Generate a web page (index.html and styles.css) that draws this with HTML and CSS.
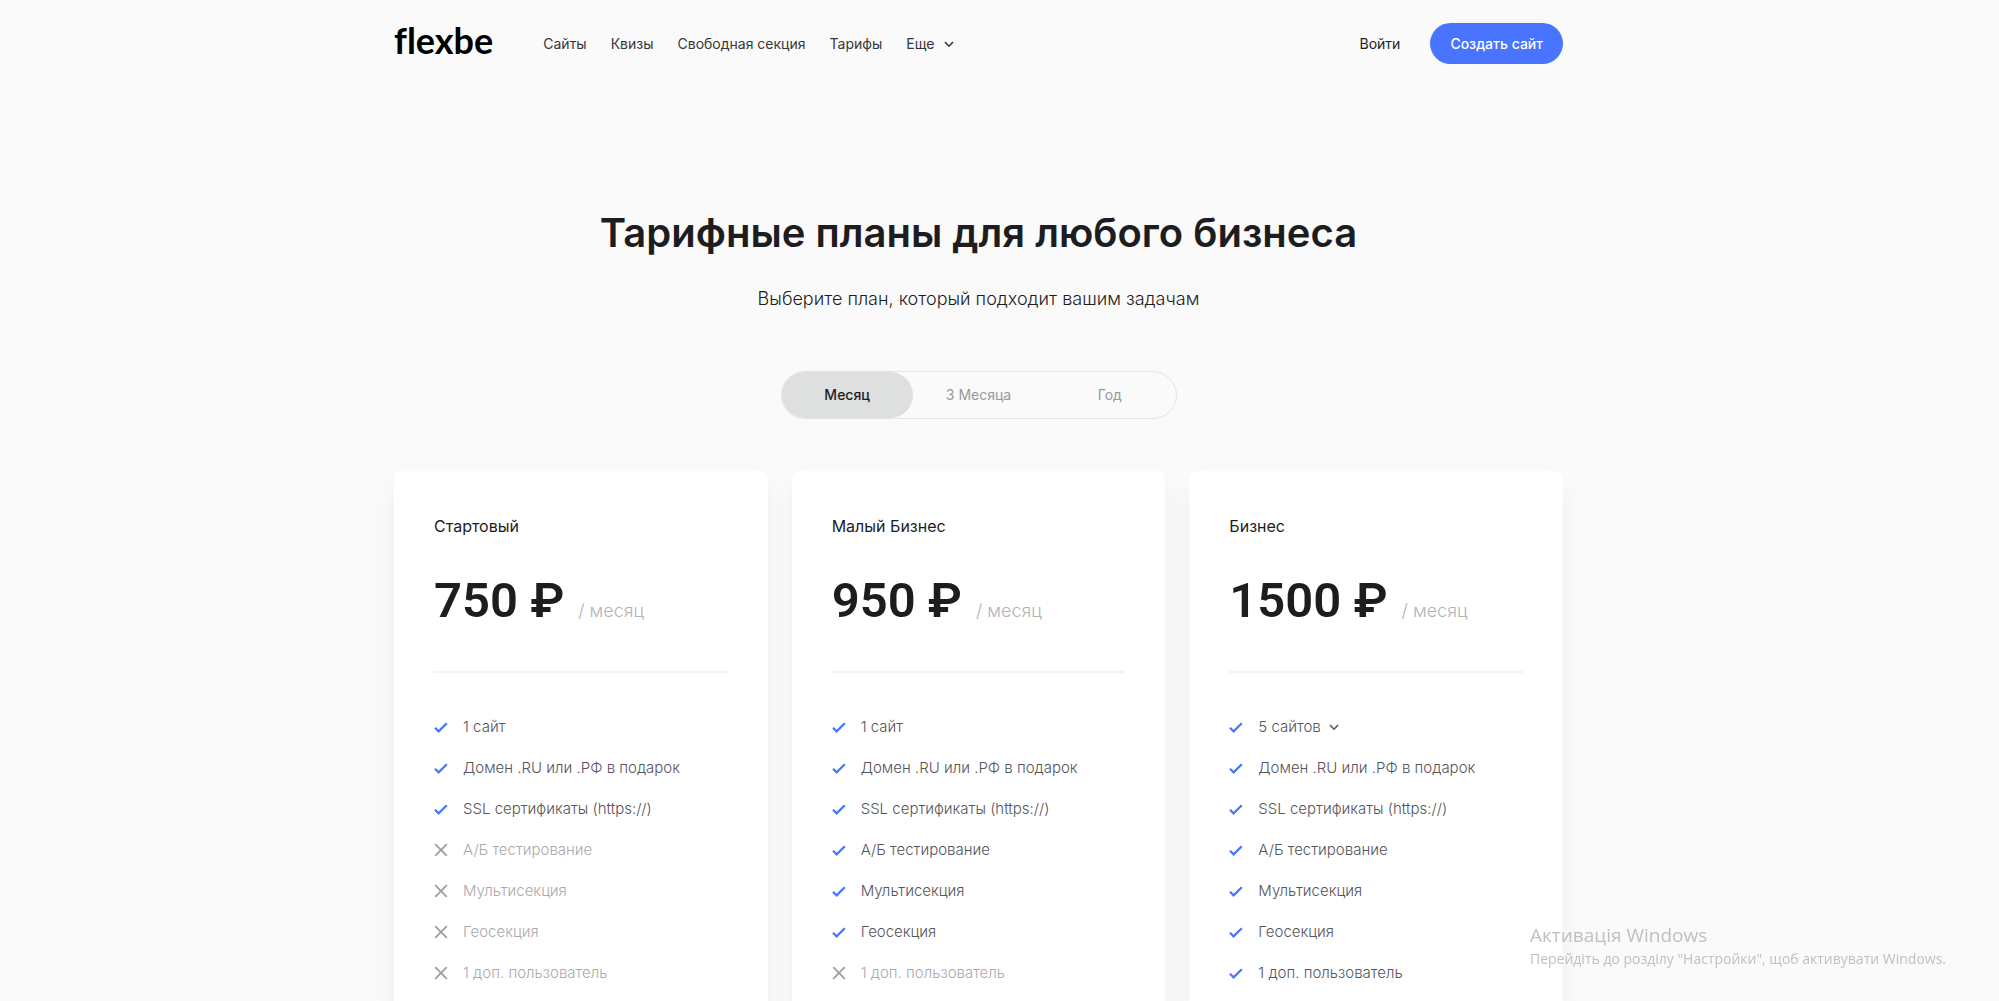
FILE: index.html
```html
<!DOCTYPE html>
<html lang="ru">
<head>
<meta charset="utf-8">
<meta name="viewport" content="width=device-width, initial-scale=1">
<title>Flexbe — Тарифы</title>
<link rel="stylesheet" href="styles.css">
</head>
<body>
<svg class="sprite" aria-hidden="true">
  <symbol id="check" viewBox="0 0 14 14"><path d="M1 7.8 L4.6 11.4 L12.8 3.2" fill="none" stroke="currentColor" stroke-width="2.2"/></symbol>
  <symbol id="cross" viewBox="0 0 14 14"><path d="M1.2 1.2 L12.8 12.8 M12.8 1.2 L1.2 12.8" fill="none" stroke="currentColor" stroke-width="1.8"/></symbol>
  <symbol id="chevron" viewBox="0 0 10 10"><path d="M1 3 L5 7.2 L9 3" fill="none" stroke="currentColor" stroke-width="1.6"/></symbol>
</svg>
<div class="page">
  <header class="header">
    <a class="logo" href="#">flexbe</a>
    <nav class="nav">
      <a href="#">Сайты</a>
      <a href="#">Квизы</a>
      <a href="#">Свободная секция</a>
      <a href="#">Тарифы</a>
      <button class="more" type="button">Еще <svg class="chevron"><use href="#chevron"/></svg></button>
    </nav>
    <a class="login" href="#">Войти</a>
    <button class="create" type="button">Создать сайт</button>
  </header>
  <main class="main">
    <h1 class="title">Тарифные планы для любого бизнеса</h1>
    <p class="subtitle">Выберите план, который подходит вашим задачам</p>
    <div class="periods">
      <button class="period active" type="button">Месяц</button>
      <button class="period" type="button">3 Месяца</button>
      <button class="period" type="button">Год</button>
    </div>
    <div class="plans">
      <section class="plan">
        <h2 class="name">Стартовый</h2>
        <p class="price"><strong>750 ₽</strong> <span>/ месяц</span></p>
        <ul class="features">
          <li><svg><use href="#check"/></svg>1 сайт</li>
          <li><svg><use href="#check"/></svg>Домен .RU или .РФ в подарок</li>
          <li><svg><use href="#check"/></svg>SSL сертификаты (https://)</li>
          <li class="off"><svg><use href="#cross"/></svg>А/Б тестирование</li>
          <li class="off"><svg><use href="#cross"/></svg>Мультисекция</li>
          <li class="off"><svg><use href="#cross"/></svg>Геосекция</li>
          <li class="off"><svg><use href="#cross"/></svg>1 доп. пользователь</li>
        </ul>
      </section>
      <section class="plan">
        <h2 class="name">Малый Бизнес</h2>
        <p class="price"><strong>950 ₽</strong> <span>/ месяц</span></p>
        <ul class="features">
          <li><svg><use href="#check"/></svg>1 сайт</li>
          <li><svg><use href="#check"/></svg>Домен .RU или .РФ в подарок</li>
          <li><svg><use href="#check"/></svg>SSL сертификаты (https://)</li>
          <li><svg><use href="#check"/></svg>А/Б тестирование</li>
          <li><svg><use href="#check"/></svg>Мультисекция</li>
          <li><svg><use href="#check"/></svg>Геосекция</li>
          <li class="off"><svg><use href="#cross"/></svg>1 доп. пользователь</li>
        </ul>
      </section>
      <section class="plan">
        <h2 class="name">Бизнес</h2>
        <p class="price"><strong>1500 ₽</strong> <span>/ месяц</span></p>
        <ul class="features">
          <li><svg><use href="#check"/></svg><button class="sites" type="button">5 сайтов <svg class="chevron"><use href="#chevron"/></svg></button></li>
          <li><svg><use href="#check"/></svg>Домен .RU или .РФ в подарок</li>
          <li><svg><use href="#check"/></svg>SSL сертификаты (https://)</li>
          <li><svg><use href="#check"/></svg>А/Б тестирование</li>
          <li><svg><use href="#check"/></svg>Мультисекция</li>
          <li><svg><use href="#check"/></svg>Геосекция</li>
          <li><svg><use href="#check"/></svg>1 доп. пользователь</li>
        </ul>
      </section>
    </div>
  </main>
</div>
<aside class="activation">
  <p class="activation-title">Активація Windows</p>
  <p class="activation-text">Перейдіть до розділу "Настройки", щоб активувати Windows.</p>
</aside>
</body>
</html>
```
FILE: styles.css
```css
* { box-sizing: border-box; }

body {
  margin: 0;
  padding-right: 42px;
  background: #fafafa;
  color: #1d1d1f;
  font: 400 15px/24px Inter, "Noto Sans", sans-serif;
}

h1, h2, p, ul { margin: 0; padding: 0; }
a { color: inherit; text-decoration: none; }
button {
  padding: 0;
  border: 0;
  background: none;
  color: inherit;
  font: inherit;
  cursor: pointer;
}
.sprite { display: none; }

.page {
  display: flex;
  flex-direction: column;
  max-width: 1169px;
  min-height: 100vh;
  margin: 0 auto;
}

/* Header */
.header {
  display: flex;
  align-items: center;
  padding-top: 23px;
  font-size: 14px;
}
.logo {
  margin-right: 50px;
  padding-bottom: 6px;
  color: #000;
  font: 700 36px/35px Lato, sans-serif;
  font-variant-ligatures: none;
}
.nav {
  display: flex;
  flex: 1;
  gap: 24px;
  color: #37373b;
}
.more, .sites {
  display: flex;
  align-items: center;
  gap: 10px;
}
.sites { gap: 8px; }
.chevron { width: 10px; height: 10px; }
.login { margin-right: 30px; }
.create {
  height: 41px;
  padding: 0 20px;
  border-radius: 21px;
  background: #4874ff;
  color: #fff;
  font-weight: 500;
}

/* Pricing */
.main {
  display: flex;
  flex: 1;
  flex-direction: column;
  align-items: center;
  padding-top: 141px;
}
.title {
  font-size: 40px;
  font-weight: 600;
  line-height: 56px;
}
.subtitle {
  margin-top: 24px;
  font-size: 18px;
  font-weight: 300;
  line-height: 28px;
}
.periods {
  display: flex;
  width: 396px;
  height: 48px;
  margin-top: 58px;
  border: 1px solid #e3e3e4;
  border-radius: 24px;
}
.period {
  flex: 1;
  border-radius: 24px;
  color: #98989c;
  font-size: 14px;
}
.period.active {
  background: #dedfdf;
  color: #1d1d1f;
  font-weight: 500;
}
.plans {
  display: grid;
  flex: 1;
  grid-template-columns: repeat(3, 1fr);
  gap: 24px;
  width: 100%;
  margin-top: 52px;
}
.plan {
  padding: 43px 40px 16px;
  border-radius: 8px 8px 0 0;
  background: #fff;
  box-shadow: 0 16px 24px rgba(0, 0, 0, 0.05);
}
.name {
  font-size: 16px;
  font-weight: 400;
  line-height: 24px;
}
.price {
  display: flex;
  align-items: baseline;
  gap: 14px;
  margin-top: 30px;
  padding-bottom: 37px;
  border-bottom: 2px solid #f3f3f3;
}
.price strong {
  font-family: Roboto, sans-serif;
  font-size: 49px;
  font-weight: 600;
  line-height: 66px;
}
.price span {
  color: #b3b4b7;
  font-size: 18px;
  font-weight: 300;
}
.features {
  display: grid;
  gap: 17px;
  margin-top: 42px;
  color: #55555a;
  font-weight: 300;
  list-style: none;
}
.features li {
  display: flex;
  align-items: center;
  gap: 15px;
}
.features li > svg {
  width: 14px;
  height: 14px;
  color: #4874ff;
}
.features .off { color: #a9aaad; }
.features .off > svg { color: #9d9ea2; }

/* System notice over the page */
.activation {
  position: fixed;
  right: 53px;
  bottom: 32px;
  color: #bfc0c2;
  font-family: "Open Sans", sans-serif;
}
.activation-title { font-size: 19px; line-height: 28px; }
.activation-text { font-size: 14px; line-height: 20px; }
```
